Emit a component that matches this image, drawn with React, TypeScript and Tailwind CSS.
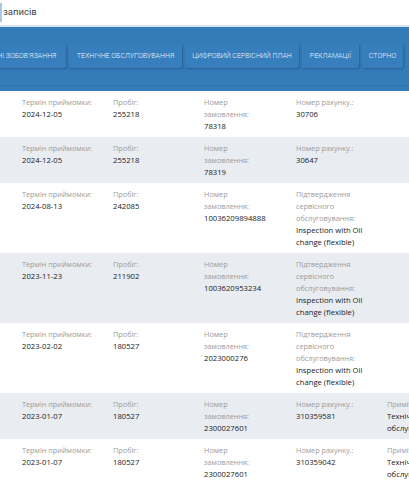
type Cell = { label: string[]; value: string[] };

interface Row {
  cells: Cell[];
}

const tabs = [
  { title: "Гарантійні зобов'язання", w: "w-[110px]" },
  { title: "Технічне обслуговування", w: "w-[113px]" },
  { title: "Цифровий сервісний план", w: "w-[114px]" },
  { title: "Рекламації", w: "w-[57px]" },
  { title: "Сторно", w: "w-[41px]" },
];

const confirm: Cell = {
  label: ["Підтвердження", "сервісного", "обслуговування:"],
  value: ["Inspection with Oil", "change (flexible)"],
};

const note: Cell = { label: ["Примітка:"], value: ["Технічне", "обслуговування"] };

function base(date: string, km: string, order: string): Cell[] {
  return [
    { label: ["Термін приймомки:"], value: [date] },
    { label: ["Пробіг:"], value: [km] },
    { label: ["Номер", "замовлення:"], value: [order] },
  ];
}

const rows: Row[] = [
  { cells: [...base("2024-12-05", "255218", "78318"), { label: ["Номер рахунку.:"], value: ["30706"] }] },
  { cells: [...base("2024-12-05", "255218", "78319"), { label: ["Номер рахунку.:"], value: ["30647"] }] },
  { cells: [...base("2024-08-13", "242085", "10036209894888"), confirm] },
  { cells: [...base("2023-11-23", "211902", "1003620953234"), confirm] },
  { cells: [...base("2023-02-02", "180527", "2023000276"), confirm] },
  { cells: [...base("2023-01-07", "180527", "2300027601"), { label: ["Номер рахунку.:"], value: ["310359581"] }, note] },
  { cells: [...base("2023-01-07", "180527", "2300027601"), { label: ["Номер рахунку.:"], value: ["310359042"] }, note] },
];

export default function App() {
  return (
    <div className="h-[480px] w-[409px] overflow-hidden bg-white font-['Open_Sans',sans-serif]">
      <div className="flex h-[25px] items-center">
        <div className="h-[19px] w-[2px] bg-[#a9c8e6]" />
        <span className="ml-[1px] font-['Roboto',sans-serif] text-[9.5px] text-[#444]">записів</span>
      </div>
      <div className="h-[2px] bg-[#d6e2ee]" />

      <nav className="flex h-[64px] flex-col bg-[#347bb9]">
        <div className="flex flex-1 items-center overflow-hidden">
          <div className="ml-[-44px] flex shrink-0 gap-[3px]">
            {tabs.map((t) => (
              <div
                key={t.title}
                className={`${t.w} flex h-[24px] shrink-0 items-center justify-center rounded-[2px] bg-[#377ebd] font-['Roboto',sans-serif] text-[7px] font-light uppercase whitespace-nowrap text-[#eef4fa] shadow-[1px_1px_2px_rgba(0,0,0,0.22)]`}
              >
                {t.title}
              </div>
            ))}
          </div>
        </div>
        <div className="mb-[5px] h-[1px] bg-[#3070aa]" />
      </nav>

      <div className="flex flex-col">
        {rows.map((row, i) => (
          <div
            key={i}
            className={`grid grid-cols-[91px_91px_92px_91px_91px] py-[5px] pl-[22px] leading-[12px] ${
              i % 2 === 1 ? "bg-[#e9ecf1]" : "bg-white"
            }`}
          >
            {row.cells.map((c, j) => (
              <div key={j} className="whitespace-nowrap">
                {c.label.map((l) => (
                  <div key={l} className="text-[7.3px] text-[#9b9b9b]">
                    {l}
                  </div>
                ))}
                {c.value.map((v) => (
                  <div key={v} className="text-[7.7px] text-[#222]">
                    {v}
                  </div>
                ))}
              </div>
            ))}
          </div>
        ))}
      </div>
    </div>
  );
}
